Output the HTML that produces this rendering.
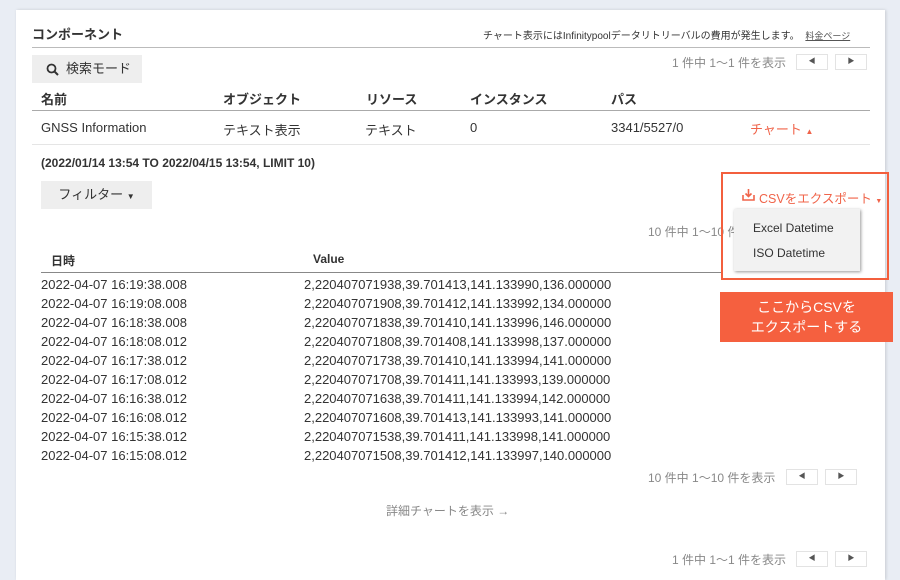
<html><head><style>
body{margin:0;width:900px;height:567px;background:#e9edf4;font-family:"Liberation Sans","Noto Sans CJK JP",sans-serif;position:relative;overflow:hidden;color:#333}
.a{position:absolute;white-space:nowrap}
.card{position:absolute;left:16px;top:10px;width:869px;height:570px;background:#fff;box-shadow:1px 0 3px rgba(0,0,0,.15)}
.hr{position:absolute;height:1px;background:#bbb}
.pg{position:absolute;width:30px;height:14px;border:1px solid #e3e3e3;background:#fff;font-size:7px;color:#555;text-align:center;line-height:14px}
.btn{position:absolute;background:#eee;font-size:13px;color:#333}
.f13{font-size:13px}.b{font-weight:bold}
.gray{color:#888;font-size:12px}
.red{color:#f0644a}
</style></head><body>
<div class="card"></div>
<div class="a f13 b" style="left:32px;top:24px;font-weight:600">コンポーネント</div>
<div class="a" style="left:483px;top:27px;font-size:10px;color:#333">チャート表示にはInfinitypoolデータリトリーバルの費用が発生します。 <span style="text-decoration:underline;color:#555;font-size:9px;margin-left:3px">料金ページ</span></div>
<div class="hr" style="left:32px;top:47px;width:838px"></div>
<div class="btn" style="left:32px;top:55px;width:110px;height:28px;line-height:28px"><svg style="position:absolute;left:14px;top:8px" width="13" height="13" viewBox="0 0 13 13"><circle cx="5.5" cy="5.5" r="4" fill="none" stroke="#333" stroke-width="1.8"/><path d="M8.5 8.5L12 12" stroke="#333" stroke-width="2"/></svg><span style="position:absolute;left:34px">検索モード</span></div>
<div class="a gray" style="left:672px;top:54px">1 件中 1〜1 件を表示</div>
<div class="pg" style="left:796px;top:54px">◀</div><div class="pg" style="left:835px;top:54px">▶</div>
<div class="a f13 b" style="left:41px;top:89px">名前</div>
<div class="a f13 b" style="left:223px;top:89px">オブジェクト</div>
<div class="a f13 b" style="left:366px;top:89px">リソース</div>
<div class="a f13 b" style="left:470px;top:89px">インスタンス</div>
<div class="a f13 b" style="left:611px;top:89px">パス</div>
<div class="hr" style="left:32px;top:110px;width:838px;background:#aaa"></div>
<div class="a f13" style="left:41px;top:120px">GNSS Information</div>
<div class="a f13" style="left:223px;top:120px">テキスト表示</div>
<div class="a f13" style="left:365px;top:120px">テキスト</div>
<div class="a f13" style="left:470px;top:120px">0</div>
<div class="a f13" style="left:611px;top:120px">3341/5527/0</div>
<div class="a f13 red" style="left:750px;top:119px">チャート <span style="font-size:8px">▲</span></div>
<div class="hr" style="left:32px;top:144px;width:838px;background:#e5e5e5"></div>
<div class="a b" style="left:41px;top:156px;font-size:12px">(2022/01/14 13:54 TO 2022/04/15 13:54, LIMIT 10)</div>
<div class="btn" style="left:41px;top:181px;width:111px;height:28px;line-height:28px;text-align:center">フィルター <span style="font-size:8px">▼</span></div>
<svg class="a" style="left:742px;top:188px" width="13" height="13" viewBox="0 0 13 13"><path d="M6.5 1V8M3.5 5.5L6.5 8.5L9.5 5.5M1 7V12H12V7" fill="none" stroke="#f0644a" stroke-width="1.6"/></svg>
<div class="a red" style="left:759px;top:188px;font-size:12.5px">CSVをエクスポート <span style="font-size:7px">▼</span></div>
<div class="a gray" style="left:648px;top:223px">10 件中 1〜10 件を表示</div>
<div class="a" style="left:734px;top:209px;width:126px;height:62px;background:#f2f2f2;box-shadow:1px 1px 3px rgba(0,0,0,.4);font-size:12px">
<div style="position:absolute;left:19px;top:12px">Excel Datetime</div>
<div style="position:absolute;left:19px;top:37px">ISO Datetime</div></div>
<div class="a" style="left:721px;top:172px;width:168px;height:108px;border:2px solid #f35f3d;box-sizing:border-box"></div>
<div class="a" style="left:720px;top:292px;width:173px;height:50px;background:#f5603f;color:#fff;font-size:14px;text-align:center;line-height:20px;padding-top:5px;box-sizing:border-box">ここからCSVを<br>エクスポートする</div>
<div class="a b" style="left:51px;top:252px;font-size:12px">日時</div>
<div class="a b" style="left:313px;top:252px;font-size:12px">Value</div>
<div class="hr" style="left:41px;top:272px;width:680px;background:#888"></div>
<div class="a" style="left:41px;top:275px;font-size:13px;line-height:19px">2022-04-07 16:19:38.008<br>2022-04-07 16:19:08.008<br>2022-04-07 16:18:38.008<br>2022-04-07 16:18:08.012<br>2022-04-07 16:17:38.012<br>2022-04-07 16:17:08.012<br>2022-04-07 16:16:38.012<br>2022-04-07 16:16:08.012<br>2022-04-07 16:15:38.012<br>2022-04-07 16:15:08.012</div>
<div class="a" style="left:304px;top:275px;font-size:13px;line-height:19px">2,220407071938,39.701413,141.133990,136.000000<br>2,220407071908,39.701412,141.133992,134.000000<br>2,220407071838,39.701410,141.133996,146.000000<br>2,220407071808,39.701408,141.133998,137.000000<br>2,220407071738,39.701410,141.133994,141.000000<br>2,220407071708,39.701411,141.133993,139.000000<br>2,220407071638,39.701411,141.133994,142.000000<br>2,220407071608,39.701413,141.133993,141.000000<br>2,220407071538,39.701411,141.133998,141.000000<br>2,220407071508,39.701412,141.133997,140.000000</div>
<div class="a gray" style="left:648px;top:469px">10 件中 1〜10 件を表示</div>
<div class="pg" style="left:786px;top:469px">◀</div><div class="pg" style="left:825px;top:469px">▶</div>
<div class="a gray" style="left:386px;top:502px">詳細チャートを表示 →</div>
<div class="a gray" style="left:672px;top:551px">1 件中 1〜1 件を表示</div>
<div class="pg" style="left:796px;top:551px">◀</div><div class="pg" style="left:835px;top:551px">▶</div>
</body></html>
